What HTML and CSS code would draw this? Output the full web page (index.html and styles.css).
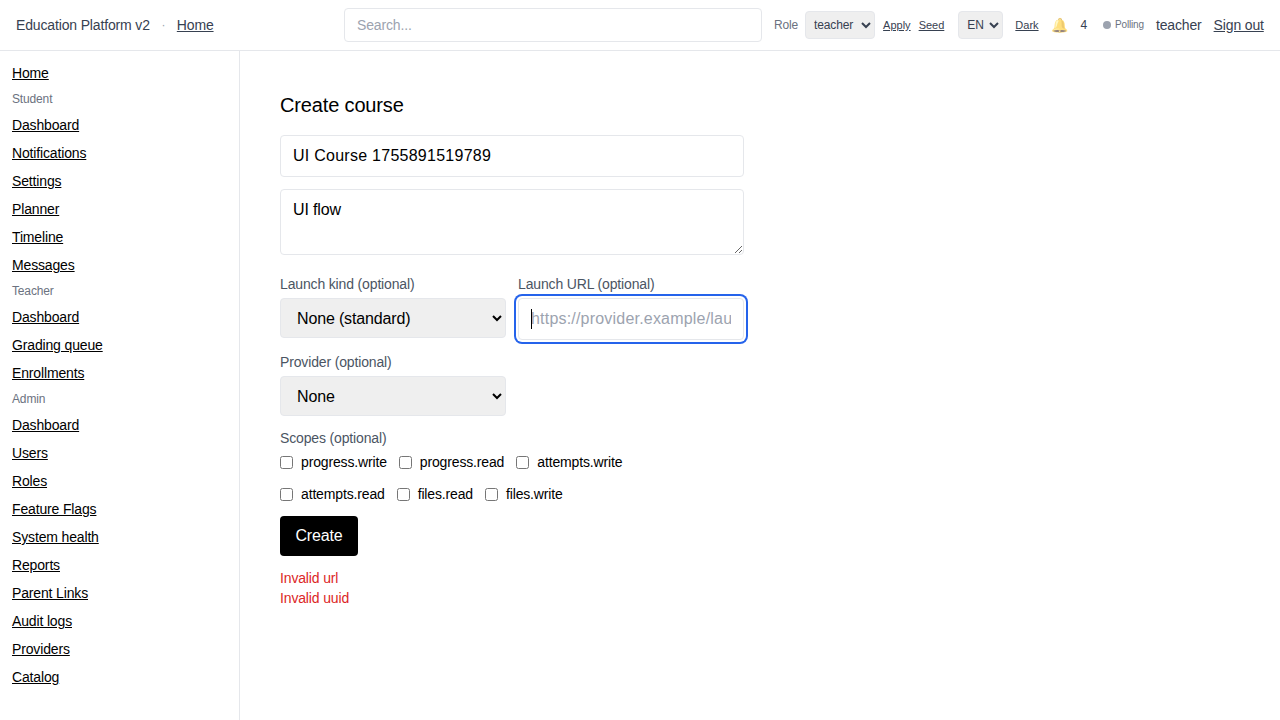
FILE: index.html
```html
<!DOCTYPE html>
<html lang="en">
<head>
	<meta charset="UTF-8">
	<title>Education Platform v2</title>
	<link rel="stylesheet" href="styles.css">
</head>
<body>
	<header class="topbar">
		<div class="brand">
			<span>Education Platform v2</span>
			<span class="dot">·</span>
			<a href="#">Home</a>
		</div>
		<input class="search" type="text" placeholder="Search...">
		<div class="tools">
			<label class="role-label">Role</label>
			<select class="mini role-select"><option>teacher</option></select>
			<a class="tool-link apply" href="#">Apply</a>
			<a class="tool-link seed" href="#">Seed</a>
			<select class="mini lang-select"><option>EN</option></select>
			<a class="tool-link dark" href="#">Dark</a>
			<span class="bell">🔔</span>
			<span class="count">4</span>
			<span class="polling"><i></i>Polling</span>
			<span class="who">teacher</span>
			<a class="signout" href="#">Sign out</a>
		</div>
	</header>
	<div class="layout">
		<nav class="sidebar">
			<a href="#">Home</a>
			<div class="group">Student</div>
			<a href="#">Dashboard</a>
			<a href="#">Notifications</a>
			<a href="#">Settings</a>
			<a href="#">Planner</a>
			<a href="#">Timeline</a>
			<a href="#">Messages</a>
			<div class="group">Teacher</div>
			<a href="#">Dashboard</a>
			<a href="#">Grading queue</a>
			<a href="#">Enrollments</a>
			<div class="group">Admin</div>
			<a href="#">Dashboard</a>
			<a href="#">Users</a>
			<a href="#">Roles</a>
			<a href="#">Feature Flags</a>
			<a href="#">System health</a>
			<a href="#">Reports</a>
			<a href="#">Parent Links</a>
			<a href="#">Audit logs</a>
			<a href="#">Providers</a>
			<a href="#">Catalog</a>
		</nav>
		<main class="content">
			<h1>Create course</h1>
			<form class="course-form">
				<input class="field title" type="text" value="UI Course 1755891519789">
				<textarea class="field area">UI flow</textarea>
				<div class="two-col">
					<div class="stack">
						<label>Launch kind (optional)</label>
						<select class="big"><option>None (standard)</option></select>
					</div>
					<div class="stack">
						<label>Launch URL (optional)</label>
						<div class="focused">
							<span class="caret"></span>
							<input class="field url" type="text" placeholder="https://provider.example/launch">
						</div>
					</div>
					<div class="stack">
						<label>Provider (optional)</label>
						<select class="big"><option>None</option></select>
					</div>
				</div>
				<div class="scopes">
					<label>Scopes (optional)</label>
					<div class="checks">
						<span class="check"><input type="checkbox">progress.write</span>
						<span class="check"><input type="checkbox">progress.read</span>
						<span class="check"><input type="checkbox">attempts.write</span>
						<span class="check"><input type="checkbox">attempts.read</span>
						<span class="check"><input type="checkbox">files.read</span>
						<span class="check"><input type="checkbox">files.write</span>
					</div>
				</div>
				<div><button class="create" type="button">Create</button></div>
				<div class="errors">
					<div>Invalid url</div>
					<div>Invalid uuid</div>
				</div>
			</form>
		</main>
	</div>
</body>
</html>
```
FILE: styles.css
```css
*{
	box-sizing: border-box;
	margin: 0;
	padding: 0;
}
html,body{
	height: 100%;
	overflow: hidden;
	background: #fff;
}
body{
	font-family: "Liberation Sans", sans-serif;
	font-size: 14px;
	line-height: 20px;
	letter-spacing: -0.15px;
	color: #000;
}
a{
	color: inherit;
	text-decoration: underline;
}
input,select,textarea,button{
	font-family: inherit;
	letter-spacing: inherit;
}

.topbar{
	display: flex;
	align-items: center;
	height: 51px;
	padding: 0 16px;
	border-bottom: 1px solid #e5e7eb;
}
.brand{
	display: flex;
	align-items: center;
	gap: 8px;
	flex: none;
	width: 328px;
	color: #374151;
}
.dot{
	color: #9ca3af;
	width: 11px;
	text-align: center;
	font-size: 12px;
}
.search{
	flex: none;
	width: 418px;
	height: 34px;
	padding: 0 12px;
	font-size: 14px;
	border: 1px solid #e5e7eb;
	border-radius: 4px;
	outline: none;
}
.search::placeholder,.url::placeholder{
	color: #9ca3af;
	opacity: 1;
}
.tools{
	display: flex;
	align-items: center;
	margin-left: 12px;
	color: #374151;
	flex: 1;
	white-space: nowrap;
}
.role-label{
	font-size: 12px;
	color: #6b7280;
	margin-right: 7px;
}
.mini{
	height: 28px;
	font-size: 12px;
	color: #374151;
	background: #efefef;
	border: 1px solid #e5e7eb;
	border-radius: 4px;
	padding: 0 0 0 4px;
}
.role-select{
	width: 70px;
}
.lang-select{
	width: 45px;
	margin-left: 14px;
}
.tool-link{
	font-size: 11px;
	letter-spacing: 0;
}
.apply{
	margin-left: 8px;
}
.seed{
	margin-left: 8px;
}
.dark{
	margin-left: 12px;
}
.bell{
	margin-left: 12px;
	font-size: 14px;
	opacity: 0.6;
}
.count{
	margin-left: 13px;
	font-size: 12px;
}
.polling{
	display: flex;
	align-items: center;
	gap: 4px;
	margin-left: 16px;
	font-size: 10px;
	color: #6b7280;
}
.polling i{
	width: 8px;
	height: 8px;
	border-radius: 50%;
	background: #9ca3af;
}
.who{
	margin-left: 12px;
}
.signout{
	margin-left: 12px;
}

.layout{
	display: flex;
	height: 669px;
}
.sidebar{
	display: flex;
	flex-direction: column;
	gap: 8px;
	width: 240px;
	padding: 12px;
	border-right: 1px solid #e5e7eb;
}
.group{
	font-size: 12px;
	line-height: 16px;
	color: #6b7280;
}
.content{
	flex: 1;
	padding: 40px;
}
h1{
	font-size: 20px;
	line-height: 28px;
	font-weight: 400;
	margin-bottom: 16px;
}
.course-form{
	display: flex;
	flex-direction: column;
	gap: 12px;
	width: 464px;
}
.field{
	display: block;
	width: 100%;
	height: 42px;
	padding: 0 12px;
	font-size: 16px;
	border: 1px solid #e5e7eb;
	border-radius: 4px;
	outline: none;
	color: #000;
}
.title{
	letter-spacing: 0.26px;
}
.area{
	height: 66px;
	padding: 8px 12px;
	line-height: 24px;
}
.two-col{
	display: grid;
	grid-template-columns: 1fr 1fr;
	gap: 12px;
	margin-top: 7px;
}
.stack{
	display: flex;
	flex-direction: column;
	gap: 4px;
}
label{
	color: #4b5563;
}
.big{
	height: 40px;
	padding: 0 12px;
	font-size: 16px;
	color: #000;
	background: #efefef;
	border: 1px solid #e5e7eb;
	border-radius: 4px;
}
.focused{
	position: relative;
}
.focused .url{
	letter-spacing: 0.2px;
	box-shadow: 0 0 0 2px #fff, 0 0 0 4px #2563eb;
}
.caret{
	position: absolute;
	left: 13px;
	top: 11px;
	width: 1px;
	height: 20px;
	background: #000;
}
.checks{
	display: flex;
	flex-wrap: wrap;
	gap: 12px;
	width: 400px;
	margin-top: 4px;
}
.check{
	display: flex;
	align-items: center;
	gap: 8px;
}
.check input{
	width: 13px;
	height: 13px;
}
.create{
	width: 78px;
	height: 40px;
	font-size: 16px;
	color: #fff;
	background: #000;
	border: none;
	border-radius: 4px;
}
.errors{
	color: #dc2626;
}
```
